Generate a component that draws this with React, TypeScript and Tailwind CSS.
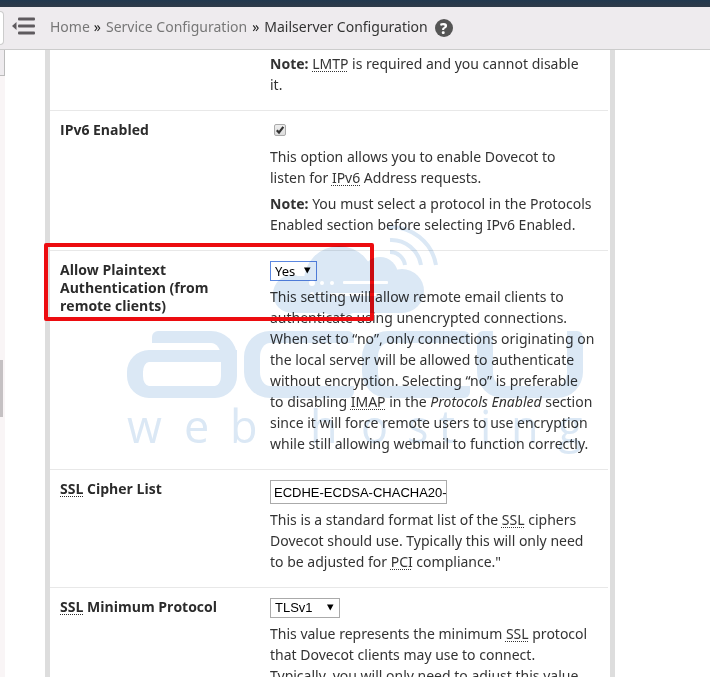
import type { ReactNode } from "react";

function Abbr({ title, children }: { title: string; children: ReactNode }) {
  return (
    <abbr title={title} className="underline decoration-dotted decoration-1 underline-offset-2">
      {children}
    </abbr>
  );
}

interface RowProps {
  label?: ReactNode;
  htmlFor?: string;
  children: ReactNode;
}

function Row({ label, htmlFor, children }: RowProps) {
  return (
    <div className="flex border-b border-[#e8e8e8] px-2.5 pt-2.5 pb-[15px]">
      <div className="w-[210px] shrink-0 pr-10">
        {label && (
          <label
            htmlFor={htmlFor}
            className="block font-['Open_Sans',sans-serif] text-[14px] leading-[18px] font-bold text-[#2b2b2b]"
          >
            {label}
          </label>
        )}
      </div>
      <div className="min-w-0 flex-1 text-[14px] leading-[21px]">{children}</div>
    </div>
  );
}

interface SelectProps {
  id: string;
  options: string[];
  className: string;
}

function Select({ id, options, className }: SelectProps) {
  return (
    <div className="relative mb-[5px] w-fit">
      <select
        id={id}
        className={`block h-5 appearance-none border bg-white pl-1 text-[13px] leading-[18px] text-black outline-none ${className}`}
      >
        {options.map((o) => (
          <option key={o}>{o}</option>
        ))}
      </select>
      <svg viewBox="0 0 8 7" className="pointer-events-none absolute top-1.5 right-1.5 h-[7px] w-2">
        <path d="M1 0.5H7.500L4.250 6.500Z" fill="#000" />
      </svg>
    </div>
  );
}

function Watermark() {
  return (
    <div className="pointer-events-none absolute -top-7 left-[77px] w-[460px] mix-blend-multiply">
      <svg viewBox="127 223 460 108" className="block h-[108px] w-[460px]">
        <g fill="#dbe8f5">
          <circle cx="339" cy="281" r="35" />
          <circle cx="380" cy="275" r="18" />
          <circle cx="402" cy="291" r="22" />
          <circle cx="292" cy="294" r="19" />
          <rect x="292" y="276" width="110" height="37" />
        </g>
        <g fill="none" stroke="#dbe8f5" strokeWidth="4">
          <path d="M390 252a15 15 0 0 1 15 13" />
          <path d="M390 240a30 30 0 0 1 31 25" />
          <path d="M388 227a46 46 0 0 1 48 38" />
        </g>
        <g fill="#fff">
          <circle cx="312" cy="283" r="3" />
          <circle cx="322" cy="283" r="2" />
          <circle cx="332" cy="283" r="2" />
          <rect x="343" y="281" width="45" height="3" rx="1" />
          <circle cx="312" cy="294" r="2" />
          <circle cx="320" cy="294" r="2" />
          <rect x="330" y="293" width="50" height="3" rx="1" />
        </g>
      </svg>

      {/* wordmark */}
      <div className="flex h-[67px] justify-between pr-1">
        <div className="relative w-[110px]">
          <div className="ml-[25px] h-[44px] rounded-tl-[6px] rounded-tr-[26px] rounded-bl-[6px] border-t-[12px] border-r-[16px] border-[#dbe8f5]" />
          <div className="absolute bottom-0 left-0 h-[48px] w-full rounded-[22px] rounded-tr-none border-x-[16px] border-y-[12px] border-[#dbe8f5]" />
        </div>
        <div className="w-[110px] rounded-l-[26px] rounded-r-[6px] border-y-[12px] border-l-[16px] border-[#dbe8f5]" />
        <div className="w-[108px] rounded-l-[26px] rounded-r-[6px] border-y-[12px] border-l-[16px] border-[#dbe8f5]" />
        <div className="w-[106px] rounded-t-[6px] rounded-b-[26px] border-x-[16px] border-b-[12px] border-[#dbe8f5]" />
      </div>

      <svg viewBox="127 394 460 70" className="-mt-1 block h-[70px] w-[460px]">
        <text
          x="127 184 230 310 361 407 439 480 511 558"
          y="443"
          fill="#dbe8f5"
          fontFamily="'Open Sans', sans-serif"
          fontSize="45"
        >
          webhosting
        </text>
      </svg>
    </div>
  );
}

export default function App() {
  return (
    <div className="flex h-screen flex-col overflow-hidden bg-white font-['Noto_Sans',sans-serif] text-[#333]">
      <div className="h-[7px] shrink-0 bg-gradient-to-b from-[#22394f] to-[#2e3a48]" />

      <header className="flex h-[43px] shrink-0 items-center border-b border-[#ccc] bg-[#eeebee]">
        <div className="h-[34px] w-1 shrink-0 rounded-r-[4px] border border-l-0 border-[#ccc] bg-white" />
        <button aria-label="Collapse menu" className="mb-1 ml-2 h-[18px] w-[23px] shrink-0">
          <svg viewBox="0 0 23 18" className="block h-[18px] w-[23px]" fill="#5e5a5e">
            <path d="M0 9L4.500 5V13Z" />
            <rect x="6" y="0.500" width="17" height="3" rx="1" />
            <rect x="6" y="7.500" width="17" height="3" rx="1" />
            <rect x="6" y="14.500" width="17" height="3" rx="1" />
          </svg>
        </button>
        <nav className="mb-1 ml-[15px] flex items-center text-[14px] leading-[21px] whitespace-nowrap">
          <a href="#home" className="text-[#777]">Home</a>
          <span className="mr-[5px] ml-1 text-[#222]">»</span>
          <a href="#service" className="text-[#777]">Service Configuration</a>
          <span className="mr-[5px] ml-[5px] text-[#222]">»</span>
          <span>Mailserver Configuration</span>
        </nav>
        <button
          aria-label="Help"
          className="ml-[7px] h-[18px] w-[18px] shrink-0 rounded-full bg-[#555] text-[15px] leading-[18px] font-extrabold text-white"
        >
          ?
        </button>
      </header>

      <div className="flex min-h-0 flex-1">
        {/* collapsed sidebar */}
        <aside className="w-[5px] shrink-0 bg-[#f9f5f6]">
          <div className="h-[26px] border-r border-b border-[#bbb] bg-[#eeebee]" />
          <div className="mt-[284px] h-[57px] w-[3px] bg-[#c5c1c3]" />
        </aside>

        <main className="mr-[95px] ml-10 h-fit flex-1 border-x-[5px] border-[#ddd] pr-0.5">
          <div className="-mt-[7px]">
            <Row>
              <p>
                <b>Note:</b> <Abbr title="Local Mail Transfer Protocol">LMTP</Abbr> is required and you cannot disable
                <br />
                it.
              </p>
            </Row>
          </div>

          <Row label="IPv6 Enabled" htmlFor="ipv6">
            <div className="flex h-[25px] items-start pt-[3px] pl-1">
              <input
                id="ipv6"
                type="checkbox"
                defaultChecked
                className="peer h-3 w-3 appearance-none rounded-[2px] border border-[#aaa] bg-gradient-to-b from-[#eee] to-[#ddd]"
              />
              <svg viewBox="0 0 12 12" className="pointer-events-none -ml-3 hidden h-3 w-3 peer-checked:block">
                <path d="M2.800 6.200L5 8.600L9.300 2.800" fill="none" stroke="#333" strokeWidth="2.200" />
              </svg>
            </div>
            <p>
              This option allows you to enable Dovecot to
              <br />
              listen for <Abbr title="Internet Protocol version 6">IPv6</Abbr> Address requests.
            </p>
            <p className="mt-[5px]">
              <b>Note:</b> You must select a protocol in the Protocols Enabled section before selecting IPv6 Enabled.
            </p>
          </Row>

          <div className="relative">
            <Row label="Allow Plaintext Authentication (from remote clients)" htmlFor="plaintext">
              <Select id="plaintext" options={["Yes", "No"]} className="w-[47px] border-[#5b87e0] font-['Noto_Sans',sans-serif]" />
              <p>
                This setting will allow remote email clients to authenticate using unencrypted connections. When set to
                “no”, only connections originating on the local server will be allowed to authenticate without
                encryption. Selecting “no” is preferable
                <br />
                to disabling <Abbr title="Internet Message Access Protocol">IMAP</Abbr> in the{" "}
                <i>Protocols Enabled</i> section since it will force remote users to use encryption while still
                allowing webmail to function correctly.
              </p>
            </Row>
            <div className="pointer-events-none absolute -top-2 -left-1.5 h-[78px] w-[330px] rounded-[2px] border-4 border-[#ec0c10]" />
            <Watermark />
          </div>

          <Row label={<><Abbr title="Secure Sockets Layer">SSL</Abbr> Cipher List</>} htmlFor="ciphers">
            <input
              id="ciphers"
              type="text"
              defaultValue="ECDHE-ECDSA-CHACHA20-"
              className="mb-[5px] block h-6 w-[177px] border border-[#aaa] bg-white pl-[3px] font-['Liberation_Sans',sans-serif] text-[13px] text-black outline-none"
            />
            <p>
              This is a standard format list of the <Abbr title="Secure Sockets Layer">SSL</Abbr> ciphers Dovecot should
              use. Typically this will only need to be adjusted for{" "}
              <Abbr title="Payment Card Industry">PCI</Abbr> compliance."
            </p>
          </Row>

          <Row label={<><Abbr title="Secure Sockets Layer">SSL</Abbr> Minimum Protocol</>} htmlFor="protocol">
            <Select
              id="protocol"
              options={["TLSv1", "TLSv1.1", "TLSv1.2"]}
              className="w-[70px] border-[#aaa] font-['Liberation_Sans',sans-serif]"
            />
            <p>
              This value represents the minimum <Abbr title="Secure Sockets Layer">SSL</Abbr> protocol
              <br />
              that Dovecot clients may use to connect.
              <br />
              Typically, you will only need to adjust this value
            </p>
          </Row>
        </main>
      </div>
    </div>
  );
}
